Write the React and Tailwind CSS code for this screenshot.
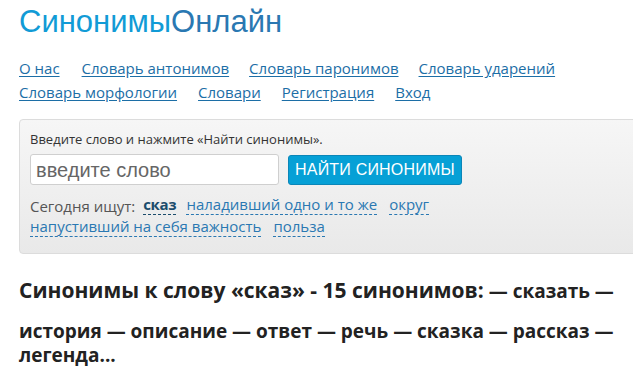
export default function App() {
  const nav1 = ["О нас", "Словарь антонимов", "Словарь паронимов", "Словарь ударений"];
  const nav2 = ["Словарь морфологии", "Словари", "Регистрация", "Вход"];
  const sans = { fontFamily: '"Open Sans", sans-serif' };
  return (
    <div className="w-[633px] h-[377px] overflow-hidden bg-white pl-[19px]" style={sans}>
      <div className="pt-[5px] text-[31px] leading-[34px] font-['Liberation_Sans',Arial,sans-serif]">
        <span className="text-[#119bd6]">Синонимы</span>
        <span className="text-[#2a78b2]">Онлайн</span>
      </div>
      <div className="mt-[17px] text-[15px] leading-[24px] text-[#1c6ea6]">
        <div className="flex gap-[20px]">
          {nav1.map((t, i) => (
            <a key={t} href="#" className={`underline underline-offset-2 ${i === 1 ? "ml-[2px]" : ""}`}>{t}</a>
          ))}
        </div>
        <div className="flex gap-[21px]">
          {nav2.map((t) => (
            <a key={t} href="#" className="underline underline-offset-2">{t}</a>
          ))}
        </div>
      </div>
      <div className="mt-[15px] w-[620px] h-[135px] rounded-[4px] border border-[#dcdcdc] bg-gradient-to-b from-[#f6f6f6] to-[#e9e9e9] pl-[10px] pt-[9px]">
        <div className="text-[13px] leading-[20px] text-[#333]">Введите слово и нажмите «Найти синонимы».</div>
        <div className="mt-[5px] flex items-center gap-[9px]">
          <div className="w-[249px] h-[31px] rounded-[3px] border border-[#cfcfcf] bg-white flex items-center pl-[5px] text-[20px] text-[#666] font-['Liberation_Sans',Arial,sans-serif]">
            введите слово
          </div>
          <button className="h-[30px] px-[6px] rounded-[3px] border border-[#0b86b8] bg-[#06a0d6] text-white text-[16px] font-['Liberation_Sans',Arial,sans-serif] tracking-[0.2px]">
            НАЙТИ СИНОНИМЫ
          </button>
        </div>
        <div className="mt-[10px] text-[15px] leading-[22px] text-[#555] flex flex-wrap w-[440px] gap-x-[12px]">
          <span className="-mr-[4px]">Сегодня ищут:</span>
          <span className="font-bold text-[#1b4c6c] border-b border-dashed border-[#1b4c6c] leading-[19px] h-[20px] tracking-[-0.3px] -mr-[2px]">сказ</span>
          {["наладивший одно и то же", "округ", "напустивший на себя важность", "польза"].map((t) => (
            <span key={t} className="text-[#2a78b2] border-b border-dashed border-[#2a78b2] leading-[19px] h-[20px] mb-[2px]">{t}</span>
          ))}
        </div>
      </div>
      <div className="mt-[21px] text-[#222] font-bold">
        <div className="flex items-baseline gap-[5px] leading-[30px]">
          <span className="text-[21px]">Синонимы к слову «сказ» - 15 синонимов:</span>
          <span className="text-[19px]">— сказать —</span>
        </div>
        <div className="mt-[13px] text-[19px] leading-[24px] w-[610px]">
          история — описание — ответ — речь — сказка — рассказ — легенда...
        </div>
      </div>
    </div>
  );
}
